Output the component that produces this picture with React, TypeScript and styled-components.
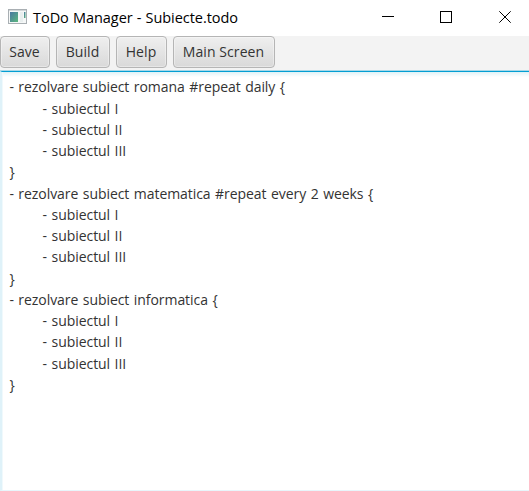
import React from 'react';
import styled, { createGlobalStyle } from 'styled-components';

const GlobalStyle = createGlobalStyle`
  * { box-sizing: border-box; }
  body { margin: 0; overflow: hidden; background: #fff; font-family: "Open Sans", sans-serif; }
`;

const Window = styled.main`
  width: 529px;
  height: 491px;
  display: flex;
  flex-direction: column;
  background: #fff;
`;

const TitleBar = styled.header`
  height: 36px;
  flex: none;
  display: flex;
  align-items: flex-start;
  padding-left: 8px;
`;

const AppIcon = styled.svg`
  flex: none;
  margin-top: 9px;
`;

const Title = styled.h1`
  flex: 1;
  margin: 0 0 0 6px;
  font-size: 14.5px;
  font-weight: 400;
  line-height: 36px;
  letter-spacing: -0.04px;
  word-spacing: 0.4px;
  color: #000;
  white-space: nowrap;
`;

const Controls = styled.svg`
  flex: none;
`;

const Toolbar = styled.nav`
  height: 34px;
  flex: none;
  display: flex;
  gap: 6px;
  background: #f3f3f3;
`;

const ToolButton = styled.button<{ $width: number }>`
  width: ${({ $width }) => $width}px;
  height: 32px;
  padding: 0 1px 1px 0;
  border: 1px solid #b5b5b5;
  border-radius: 4px;
  background: linear-gradient(#efefef, #d9d9d9);
  box-shadow: inset 0 0 0 1px rgba(255, 255, 255, 0.35);
  color: #333;
  font: 14px/29px "Open Sans", sans-serif;
  letter-spacing: 0.08px;
  white-space: nowrap;
`;

const Editor = styled.section`
  flex: 1;
  min-height: 0;
  border-top: 1px solid #a8d8e8;
  display: flex;
  flex-direction: column;
`;

const EditorContent = styled.div`
  flex: 1;
  border-top: 1px solid #039ed3;
  border-left: 2px solid #dff2f9;
  border-bottom: 1px solid #e8f6fb;
  padding: 4.25px 0 0 7px;
  background: linear-gradient(#dff2f7, #fff 5px);
  box-shadow: inset 1px 0 #f0f9fc;
`;

const Line = styled.div<{ $nested: boolean }>`
  height: 21.25px;
  padding-left: ${({ $nested }) => ($nested ? 33.6 : 0.4)}px;
  font-size: 14px;
  line-height: 21.25px;
  letter-spacing: -0.06px;
  word-spacing: 0.95px;
  color: #333;
  white-space: pre;
`;

const buttons = [
  { label: 'Save', width: 50 },
  { label: 'Build', width: 54 },
  { label: 'Help', width: 51 },
  { label: 'Main Screen', width: 102 },
];

type Entry = { text: string; nested?: boolean };

const items: Entry[] = [
  { text: '- subiectul I', nested: true },
  { text: '- subiectul II', nested: true },
  { text: '- subiectul III', nested: true },
  { text: '}' },
];

const lines: Entry[] = [
  { text: '- rezolvare subiect romana #repeat daily {' },
  ...items,
  { text: '- rezolvare subiect matematica #repeat every 2 weeks {' },
  ...items,
  { text: '- rezolvare subiect informatica {' },
  ...items,
];

export default function App() {
  return (
    <Window>
      <GlobalStyle />
      <TitleBar>
        <AppIcon width="19" height="16" viewBox="0 0 19 16">
          <defs>
            <linearGradient id="screen" x1="0" y1="0" x2="1" y2="1">
              <stop offset="0" stopColor="#4977a2" />
              <stop offset="1" stopColor="#5bb77d" />
            </linearGradient>
          </defs>
          <rect x="0.5" y="0.5" width="18" height="14" fill="#f5f7f7" stroke="#a9afb3" />
          <path d="M1 1.5h17" stroke="#d2d6d8" />
          <rect x="2" y="3" width="8" height="10" fill="url(#screen)" />
          <rect x="12" y="3" width="3" height="10" fill="#e8eeee" />
          <rect x="16" y="3" width="1.5" height="6" fill="url(#screen)" />
        </AppIcon>
        <Title>ToDo Manager - Subiecte.todo</Title>
        <Controls width="147" height="34" viewBox="382 0 147 34" fill="none" stroke="#000">
          <path d="M382 16.5h12" shapeRendering="crispEdges" />
          <rect x="440.5" y="11.5" width="11" height="11" shapeRendering="crispEdges" />
          <path d="M499.3 11.3l11.4 11.4M510.7 11.3l-11.4 11.4" />
        </Controls>
      </TitleBar>
      <Toolbar>
        {buttons.map((b) => (
          <ToolButton key={b.label} $width={b.width}>
            {b.label}
          </ToolButton>
        ))}
      </Toolbar>
      <Editor>
        <EditorContent>
          {lines.map((line, i) => (
            <Line key={i} $nested={!!line.nested}>
              {line.text}
            </Line>
          ))}
        </EditorContent>
      </Editor>
    </Window>
  );
}
